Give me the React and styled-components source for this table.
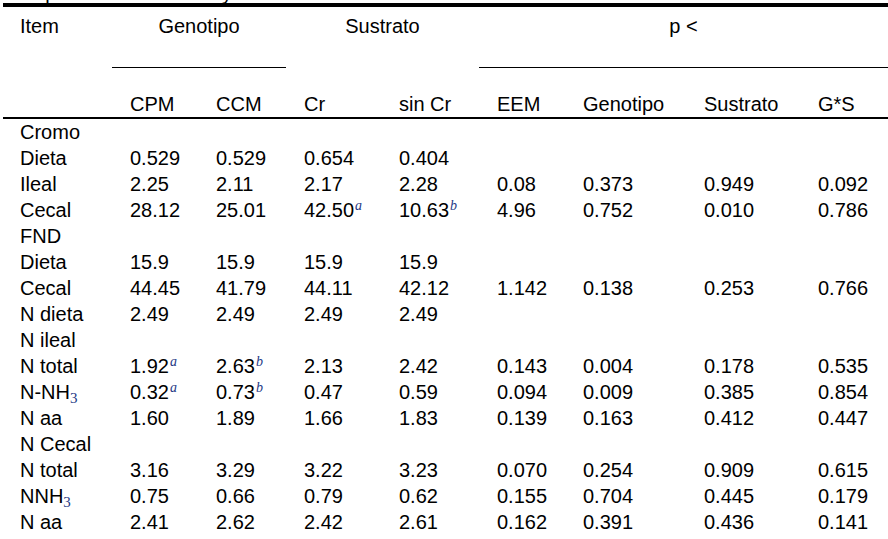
import styled, { createGlobalStyle } from "styled-components";

const GlobalStyle = createGlobalStyle`
  body {
    margin: 0;
    background: #ffffff;
    color: #000000;
    font-family: "Liberation Sans", Arial, sans-serif;
  }
`;

const COLS = "109px 86px 88px 95px 98px 86px 121px 114px 88px";

const Page = styled.div`
  padding-left: 3px;
  width: 885px;
`;

const Caption = styled.div`
  height: 3px;
  overflow: hidden;
  display: flex;
  align-items: flex-end;
  font-size: 20px;
  line-height: 20px;
  white-space: nowrap;
`;

const Rule = styled.div`
  height: ${(p) => p.$size}px;
  background: #000;
`;

const Grid = styled.div`
  display: grid;
  grid-template-columns: ${COLS};
  font-size: 20px;
  line-height: 26px;
  white-space: nowrap;
`;

const GroupRow = styled(Grid)`
  margin-top: 6px;
`;

const Group = styled.div`
  grid-column: span ${(p) => p.$span || 1};
  text-align: ${(p) => (p.$center ? "center" : "left")};
  padding-left: ${(p) => (p.$center ? 0 : 17)}px;
`;

const CmidRow = styled(Grid)`
  height: 52px;
`;

const Cmid = styled.div`
  grid-column: ${(p) => p.$col} / span ${(p) => p.$span};
  margin-top: 28px;
  border-top: 1px solid #000;
  height: 0;
`;

const Cell = styled.div`
  padding-left: ${(p) => (p.$first ? 17 : 18)}px;
`;

const Sup = styled.sup`
  font-family: "Liberation Serif", "Times New Roman", serif;
  font-style: italic;
  font-size: 14px;
  line-height: 0;
  vertical-align: 7px;
  margin-left: 1px;
  color: #1f3a86;
`;

const Sub = styled.sub`
  font-family: "Liberation Serif", "Times New Roman", serif;
  font-size: 15px;
  line-height: 0;
  vertical-align: -4px;
  color: #1f3a86;
`;

const nh3 = (
  <>
    N-NH<Sub>3</Sub>
  </>
);
const nnh3 = (
  <>
    NNH<Sub>3</Sub>
  </>
);

const rows = [
  { label: "Cromo" },
  { label: "Dieta", v: ["0.529", "0.529", "0.654", "0.404"] },
  { label: "Ileal", v: ["2.25", "2.11", "2.17", "2.28", "0.08", "0.373", "0.949", "0.092"] },
  { label: "Cecal", v: ["28.12", "25.01", ["42.50", "a"], ["10.63", "b"], "4.96", "0.752", "0.010", "0.786"] },
  { label: "FND" },
  { label: "Dieta", v: ["15.9", "15.9", "15.9", "15.9"] },
  { label: "Cecal", v: ["44.45", "41.79", "44.11", "42.12", "1.142", "0.138", "0.253", "0.766"] },
  { label: "N dieta", v: ["2.49", "2.49", "2.49", "2.49"] },
  { label: "N ileal" },
  { label: "N total", v: [["1.92", "a"], ["2.63", "b"], "2.13", "2.42", "0.143", "0.004", "0.178", "0.535"] },
  { label: nh3, v: [["0.32", "a"], ["0.73", "b"], "0.47", "0.59", "0.094", "0.009", "0.385", "0.854"] },
  { label: "N aa", v: ["1.60", "1.89", "1.66", "1.83", "0.139", "0.163", "0.412", "0.447"] },
  { label: "N Cecal" },
  { label: "N total", v: ["3.16", "3.29", "3.22", "3.23", "0.070", "0.254", "0.909", "0.615"] },
  { label: nnh3, v: ["0.75", "0.66", "0.79", "0.62", "0.155", "0.704", "0.445", "0.179"] },
  { label: "N aa", v: ["2.41", "2.62", "2.42", "2.61", "0.162", "0.391", "0.436", "0.141"] },
];

const heads = ["CPM", "CCM", "Cr", "sin Cr", "EEM", "Genotipo", "Sustrato", "G*S"];

const Value = ({ value }) =>
  Array.isArray(value) ? (
    <>
      {value[0]}
      <Sup>{value[1]}</Sup>
    </>
  ) : (
    value
  );

export default function App() {
  return (
    <Page>
      <GlobalStyle />
      <Caption>Composición de la dieta y del contenido ileal</Caption>
      <Rule $size={4} />
      <GroupRow>
        <Group>Item</Group>
        <Group $span={2} $center>
          Genotipo
        </Group>
        <Group $span={2} $center>
          Sustrato
        </Group>
        <Group $span={4} $center>
          p &lt;
        </Group>
      </GroupRow>
      <CmidRow>
        <Cmid $col={2} $span={2} />
        <Cmid $col={6} $span={4} />
      </CmidRow>
      <Grid>
        <Cell $first />
        {heads.map((h) => (
          <Cell key={h}>{h}</Cell>
        ))}
      </Grid>
      <Rule $size={2} />
      {rows.map((r, i) => (
        <Grid key={i}>
          <Cell $first>{r.label}</Cell>
          {(r.v || []).map((v, j) => (
            <Cell key={j}>
              <Value value={v} />
            </Cell>
          ))}
        </Grid>
      ))}
    </Page>
  );
}
